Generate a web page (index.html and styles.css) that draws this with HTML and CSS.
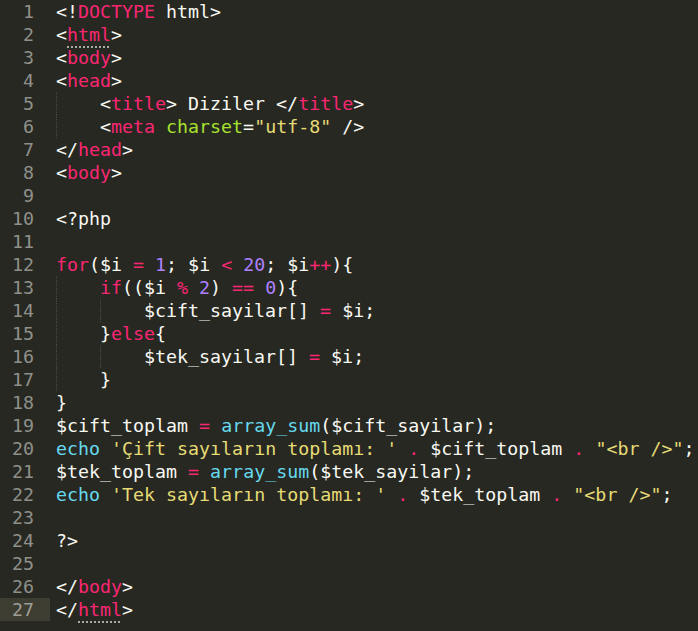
FILE: index.html
```html
<!DOCTYPE html>
<html>
<head>
<meta charset="utf-8">
<link rel="stylesheet" href="styles.css">
</head>
<body>
<div class="editor">
<div class="line"><span class="gutter">1</span><span class="code"><span class="w">&lt;!</span><span class="k">DOCTYPE</span><span class="w"> html&gt;</span></span></div>
<div class="line"><span class="gutter">2</span><span class="code">&lt;<span class="k match">html</span>&gt;</span></div>
<div class="line"><span class="gutter">3</span><span class="code">&lt;<span class="k">body</span>&gt;</span></div>
<div class="line"><span class="gutter">4</span><span class="code">&lt;<span class="k">head</span>&gt;</span></div>
<div class="line"><span class="gutter">5</span><span class="code"><span class="ind"></span>&lt;<span class="k">title</span>&gt; Diziler &lt;/<span class="k">title</span>&gt;</span></div>
<div class="line"><span class="gutter">6</span><span class="code"><span class="ind"></span>&lt;<span class="k">meta</span> <span class="a">charset</span>=<span class="s">"utf-8"</span> /&gt;</span></div>
<div class="line"><span class="gutter">7</span><span class="code">&lt;/<span class="k">head</span>&gt;</span></div>
<div class="line"><span class="gutter">8</span><span class="code">&lt;<span class="k">body</span>&gt;</span></div>
<div class="line"><span class="gutter">9</span><span class="code"></span></div>
<div class="line"><span class="gutter">10</span><span class="code">&lt;?php</span></div>
<div class="line"><span class="gutter">11</span><span class="code"></span></div>
<div class="line"><span class="gutter">12</span><span class="code"><span class="k">for</span>($i <span class="k">=</span> <span class="n">1</span>; $i <span class="k">&lt;</span> <span class="n">20</span>; $i<span class="k">++</span>){</span></div>
<div class="line"><span class="gutter">13</span><span class="code"><span class="ind"></span><span class="k">if</span>(($i <span class="k">%</span> <span class="n">2</span>) <span class="k">==</span> <span class="n">0</span>){</span></div>
<div class="line"><span class="gutter">14</span><span class="code"><span class="ind"></span><span class="ind"></span>$cift_sayilar[] <span class="k">=</span> $i;</span></div>
<div class="line"><span class="gutter">15</span><span class="code"><span class="ind"></span>}<span class="k">else</span>{</span></div>
<div class="line"><span class="gutter">16</span><span class="code"><span class="ind"></span><span class="ind"></span>$tek_sayilar[] <span class="k">=</span> $i;</span></div>
<div class="line"><span class="gutter">17</span><span class="code"><span class="ind"></span>}</span></div>
<div class="line"><span class="gutter">18</span><span class="code">}</span></div>
<div class="line"><span class="gutter">19</span><span class="code">$cift_toplam <span class="k">=</span> <span class="f">array_sum</span>($cift_sayilar);</span></div>
<div class="line"><span class="gutter">20</span><span class="code"><span class="f">echo</span> <span class="s">'Çift sayıların toplamı: '</span> <span class="k">.</span> $cift_toplam <span class="k">.</span> <span class="s">"&lt;br /&gt;"</span>;</span></div>
<div class="line"><span class="gutter">21</span><span class="code">$tek_toplam <span class="k">=</span> <span class="f">array_sum</span>($tek_sayilar);</span></div>
<div class="line"><span class="gutter">22</span><span class="code"><span class="f">echo</span> <span class="s">'Tek sayıların toplamı: '</span> <span class="k">.</span> $tek_toplam <span class="k">.</span> <span class="s">"&lt;br /&gt;"</span>;</span></div>
<div class="line"><span class="gutter">23</span><span class="code"></span></div>
<div class="line"><span class="gutter">24</span><span class="code">?&gt;</span></div>
<div class="line"><span class="gutter">25</span><span class="code"></span></div>
<div class="line"><span class="gutter">26</span><span class="code">&lt;/<span class="k">body</span>&gt;</span></div>
<div class="line current"><span class="gutter">27</span><span class="code">&lt;/<span class="k match">html</span>&gt;</span></div>
</div>
</body>
</html>
```
FILE: styles.css
```css
html, body {
  margin: 0;
  padding: 0;
  background: #272822;
  height: 100%;
}
.editor {
  display: flex;
  flex-direction: column;
  font-family: "DejaVu Sans Mono", "Liberation Mono", monospace;
  font-size: 18.3px;
  color: #f8f8f2;
}
.line {
  display: flex;
  height: 23px;
  line-height: 23px;
  white-space: pre;
}
.gutter {
  width: 34px;
  padding-right: 16px;
  text-align: right;
  color: #8f908a;
  flex: none;
}
.current .gutter {
  background: #3e3d32;
  color: #9e9e98;
}
.code {
  display: block;
  padding-left: 6px;
  white-space: pre;
}
.ind {
  display: inline-block;
  vertical-align: top;
  width: 44px;
  height: 23px;
  box-sizing: border-box;
  border-left: 1px dotted #4a4b44;
}
.k { color: #f92672; }
.s { color: #e6db74; }
.a { color: #a6e22e; }
.n { color: #ae81ff; }
.f { color: #66d9ef; }
.w { color: #f8f8f2; }
.match {
  text-decoration: underline dotted #b8b8b0;
  text-underline-offset: 6px;
}
```
